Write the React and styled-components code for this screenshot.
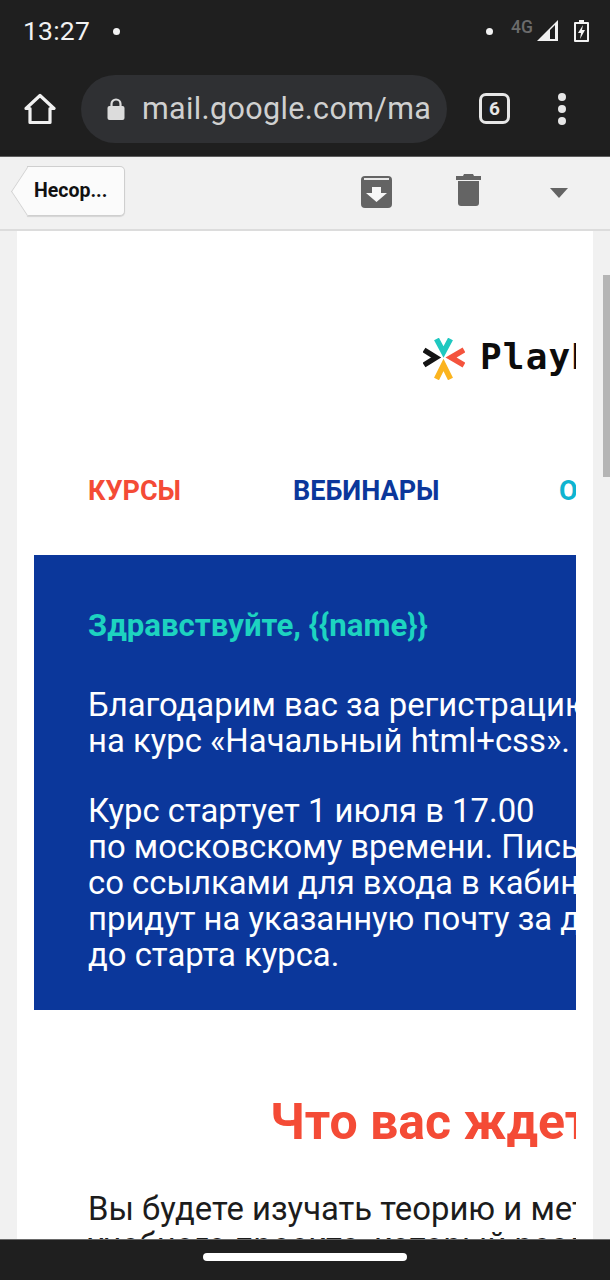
import React from 'react';
import styled, { createGlobalStyle } from 'styled-components';

const GlobalStyle = createGlobalStyle`
  html, body {
    margin: 0;
    padding: 0;
    background: #f1f1f1;
    overflow: hidden;
  }
  * { box-sizing: border-box; }
`;

const Screen = styled.div`
  width: 610px;
  height: 1280px;
  position: relative;
  display: flex;
  flex-direction: column;
  overflow: hidden;
  font-family: Roboto, "Noto Sans", sans-serif;
`;

const StatusBar = styled.div`
  height: 62px;
  flex: none;
  background: #1f1f1f;
  color: #f2f2f2;
  display: flex;
  align-items: center;
  padding: 0 21px 0 23px;
`;

const Time = styled.span`
  font-size: 26.5px;
  line-height: 62px;
  letter-spacing: 0.2px;
  width: 90px;
`;

const Dot = styled.span`
  width: 7px;
  height: 7px;
  border-radius: 50%;
  background: #f2f2f2;
  margin-left: ${(p) => p.$left || 0}px;
`;

const NetLabel = styled.span`
  font-size: 17.5px;
  color: #6b6b6b;
  font-weight: 500;
  margin: -9px 0 0 18px;
`;

const AddressRow = styled.div`
  height: 95px;
  flex: none;
  background: #1f1f1f;
  border-bottom: 1px solid #5c5c5c;
  display: flex;
  align-items: center;
  padding: 0 0 1px 24px;
`;

const UrlPill = styled.div`
  width: 366px;
  height: 68px;
  margin-left: 25px;
  border-radius: 34px;
  background: #2f3033;
  display: flex;
  align-items: center;
  padding-left: 26px;
  overflow: hidden;
`;

const UrlText = styled.span`
  font-size: 30.5px;
  color: #d0d0d0;
  margin-left: 17px;
  letter-spacing: 0.35px;
  white-space: nowrap;
`;

const TabCount = styled.div`
  width: 31px;
  height: 31px;
  margin-left: 32px;
  border: 3px solid #e6e6e6;
  border-radius: 7px;
  color: #e6e6e6;
  font-size: 19px;
  font-weight: 700;
  display: flex;
  align-items: center;
  justify-content: center;
`;

const MenuDots = styled.div`
  margin-left: 48px;
  display: flex;
  flex-direction: column;
  gap: 4px;
  span {
    width: 8px;
    height: 8px;
    border-radius: 50%;
    background: #e6e6e6;
  }
`;

const Toolbar = styled.div`
  height: 74px;
  flex: none;
  background: #f1f1f1;
  border-bottom: 2px solid #dcdcdc;
  display: flex;
  align-items: center;
  position: relative;
`;

const BackLabel = styled.div`
  position: relative;
  margin-left: 27px;
  width: 98px;
  height: 50px;
  margin-top: -4px;
  background: #fbfbfb;
  border: 1px solid #cfcfcf;
  border-left: none;
  border-radius: 0 5px 5px 0;
  box-shadow: 0 1px 1px rgba(0, 0, 0, 0.12);
  font-size: 19.5px;
  font-weight: 700;
  color: #111;
  line-height: 48px;
  padding-left: 7px;
  &::before {
    content: '';
    position: absolute;
    left: -17px;
    top: 7px;
    width: 34px;
    height: 34px;
    background: #fbfbfb;
    border-left: 1px solid #cfcfcf;
    border-bottom: 1px solid #cfcfcf;
    transform: scaleX(0.66) rotate(45deg);
  }
  span {
    position: relative;
    z-index: 1;
  }
`;

const ToolIcon = styled.svg`
  flex: none;
  margin-left: ${(p) => p.$left}px;
  margin-top: ${(p) => p.$top}px;
`;

const Body = styled.div`
  flex: 1;
  min-height: 0;
  background: #f1f1f1;
  padding: 0 17px;
  overflow: hidden;
`;

const Mail = styled.div`
  width: 576px;
  height: 100%;
  background: #fff;
`;

const MailClip = styled.div`
  width: 559px;
  height: 100%;
  overflow: hidden;
  padding-left: 17px;
`;

const Logo = styled.div`
  display: flex;
  align-items: center;
  height: 42px;
  margin: 107px 0 0 389px;
  white-space: nowrap;
  width: 400px;
`;

const LogoMarkWrap = styled.svg`
  flex: none;
`;

const LogoText = styled.span`
  font-family: "DejaVu Sans Mono", "Liberation Mono", monospace;
  font-size: 36px;
  font-weight: 700;
  color: #0c0c0c;
  margin: -6px 0 0 15px;
  letter-spacing: 1.2px;
`;

const Nav = styled.div`
  display: flex;
  height: 32px;
  margin: 95px 0 0 54px;
  white-space: nowrap;
`;

const NavLink = styled.span`
  font-size: 27px;
  line-height: 32px;
  font-weight: 700;
  color: ${(p) => p.$color};
  width: ${(p) => p.$width}px;
  flex: none;
`;

const Banner = styled.div`
  width: 600px;
  height: 455px;
  margin-top: 48px;
  background: #0b379b;
  padding: 53px 0 0 54px;
  color: #fff;
  white-space: nowrap;
`;

const Greeting = styled.div`
  font-size: 31.2px;
  line-height: 36px;
  font-weight: 700;
  color: #1dd3c0;
  margin-bottom: 43px;
`;

const Para = styled.p`
  margin: 0 0 34px;
  font-size: 32.85px;
  line-height: 36px;
`;

const Title = styled.h1`
  margin: 84px 0 0 236px;
  font-size: 50px;
  line-height: 56px;
  font-weight: 700;
  color: #f44b36;
  white-space: nowrap;
`;

const Intro = styled.p`
  margin: 41px 0 0 54px;
  font-size: 32.85px;
  line-height: 36px;
  color: #1c1c1c;
  white-space: nowrap;
`;

const Scrollbar = styled.div`
  position: absolute;
  right: 0;
  top: 275px;
  width: 7px;
  height: 202px;
  background: #b5b5b5;
`;

const NavBar = styled.div`
  position: absolute;
  left: 0;
  right: 0;
  bottom: 0;
  height: 41px;
  background: #1f1f1f;
  border-top: 1px solid #6a6a6a;
  display: flex;
  justify-content: center;
  padding-top: 13px;
`;

const HomeHandle = styled.div`
  width: 204px;
  height: 8px;
  border-radius: 4px;
  background: #fff;
`;

const SignalIcon = () => (
  <svg width="22" height="22" viewBox="0 0 22 22" style={{ marginLeft: 4 }}>
    <path d="M0 21 L21 0 V21 Z" fill="#f2f2f2" />
    <path d="M13 10 L18 5 V19 H13 Z" fill="#1f1f1f" />
  </svg>
);

const BatteryIcon = () => (
  <svg width="15" height="22" viewBox="0 0 15 22" style={{ marginLeft: 15 }}>
    <path d="M5 0 H10 V2 H14 Q15 2 15 3 V21 Q15 22 14 22 H1 Q0 22 0 21 V3 Q0 2 1 2 H5 Z" fill="#f2f2f2" />
    <rect x="2" y="4" width="11" height="16" fill="#1f1f1f" />
    <path d="M9 5 L4 13 H7 L6 19 L11 10 H8 Z" fill="#f2f2f2" />
  </svg>
);

const HomeIcon = () => (
  <svg width="32" height="32" viewBox="0 0 32 32" fill="none" stroke="#f0f0f0" strokeWidth="3.2" strokeLinejoin="round">
    <path d="M2 15.5 L16 2.5 L30 15.5 H26 V29.5 H6 V15.5 Z" />
  </svg>
);

const LockIcon = () => (
  <svg width="18" height="22" viewBox="0 0 18 22">
    <path d="M4.5 9 V6 a4.5 4.5 0 0 1 9 0 V9" fill="none" stroke="#dcdcdc" strokeWidth="2.2" />
    <rect x="0.5" y="8" width="17" height="14" rx="2" fill="#dcdcdc" />
  </svg>
);

const ArchiveIcon = () => (
  <ToolIcon $left={236} $top={-3} width="31" height="32" viewBox="0 0 31 32">
    <path d="M4 0 H27 Q31 0 31 4 V28 Q31 32 27 32 H4 Q0 32 0 28 V4 Q0 0 4 0 Z" fill="#646464" />
    <rect x="3" y="2" width="25" height="2" fill="#e8e8e8" />
    <path d="M11 11 H20 V17 H26 L15.5 26 L5 17 H11 Z" fill="#f7f7f7" />
  </ToolIcon>
);

const TrashIcon = () => (
  <ToolIcon $left={64} $top={-7} width="25" height="32" viewBox="0 0 25 32">
    <path d="M8 0 H17 L18 2 H25 V6 H0 V2 H7 Z" fill="#646464" />
    <path d="M2 7 H23 V29 Q23 32 20 32 H5 Q2 32 2 29 Z" fill="#646464" />
  </ToolIcon>
);

const CaretIcon = () => (
  <ToolIcon $left={69} $top={-1} width="18" height="10" viewBox="0 0 18 10">
    <path d="M0 0 H18 L9 10 Z" fill="#646464" />
  </ToolIcon>
);

const LogoMark = () => (
  <LogoMarkWrap width="42" height="42" viewBox="0 0 42 42" fill="none" strokeWidth="5.5">
    <path d="M13.5 1 L20.5 14 L27.5 1" stroke="#1fc8c0" />
    <path d="M1 12 L13 19.5 L1 27" stroke="#141414" />
    <path d="M41 12 L28 19.5 L41 27" stroke="#f4533d" />
    <path d="M13.5 41 L20.5 27 L27.5 41" stroke="#fbb41f" />
  </LogoMarkWrap>
);

export default function App() {
  return (
    <Screen>
      <GlobalStyle />
      <StatusBar>
        <Time>13:27</Time>
        <Dot />
        <Dot $left={366} />
        <NetLabel>4G</NetLabel>
        <SignalIcon />
        <BatteryIcon />
      </StatusBar>
      <AddressRow>
        <HomeIcon />
        <UrlPill>
          <LockIcon />
          <UrlText>mail.google.com/ma</UrlText>
        </UrlPill>
        <TabCount>6</TabCount>
        <MenuDots>
          <span />
          <span />
          <span />
        </MenuDots>
      </AddressRow>
      <Toolbar>
        <BackLabel>
          <span>Несор...</span>
        </BackLabel>
        <ArchiveIcon />
        <TrashIcon />
        <CaretIcon />
      </Toolbar>
      <Body>
        <Mail>
          <MailClip>
            <Logo>
              <LogoMark />
              <LogoText>PlayDoc</LogoText>
            </Logo>
            <Nav>
              <NavLink $color="#f44b36" $width={205}>КУРСЫ</NavLink>
              <NavLink $color="#0b379b" $width={266}>ВЕБИНАРЫ</NavLink>
              <NavLink $color="#0fb4d0" $width={120}>О НАС</NavLink>
            </Nav>
            <Banner>
              <Greeting>Здравствуйте, {'{{name}}'}</Greeting>
              <Para>
                Благодарим вас за регистрацию
                <br />
                на курс «Начальный html+css».
              </Para>
              <Para>
                Курс стартует 1 июля в 17.00
                <br />
                по московскому времени. Письмо
                <br />
                со ссылками для входа в кабинет
                <br />
                придут на указанную почту за день
                <br />
                до старта курса.
              </Para>
            </Banner>
            <Title>Что вас ждет</Title>
            <Intro>
              Вы будете изучать теорию и методы
              <br />
              учебного проекта, который реализуете
            </Intro>
          </MailClip>
        </Mail>
      </Body>
      <Scrollbar />
      <NavBar>
        <HomeHandle />
      </NavBar>
    </Screen>
  );
}
